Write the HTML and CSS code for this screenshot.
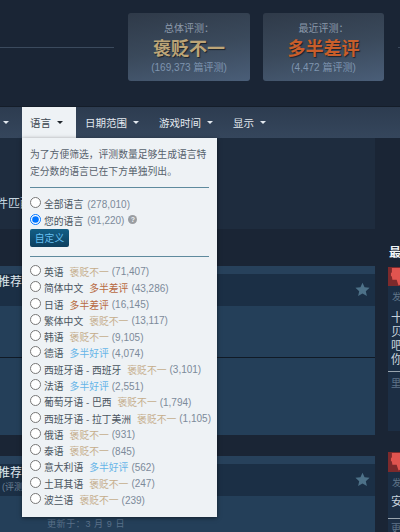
FILE: index.html
```html
<!DOCTYPE html>
<html lang="zh-CN">
<head>
<meta charset="utf-8">
<title>用户评测</title>
<link rel="stylesheet" href="styles.css">
</head>
<body>
<div class="page">
  <header class="summary">
    <div class="rule"></div>
    <div class="score">
      <div class="score-label">总体评测：</div>
      <div class="score-value mixed">褒贬不一</div>
      <div class="score-count">(169,373 篇评测)</div>
    </div>
    <div class="score">
      <div class="score-label">最近评测：</div>
      <div class="score-value negative">多半差评</div>
      <div class="score-count">(4,472 篇评测)</div>
    </div>
    <div class="rule-end"></div>
  </header>

  <nav class="filters">
    <div class="tab tab-stub"><span class="caret"></span></div>
    <div class="tab tab-active">语言<span class="caret"></span></div>
    <div class="tab">日期范围<span class="caret"></span></div>
    <div class="tab">游戏时间<span class="caret"></span></div>
    <div class="tab">显示<span class="caret"></span></div>

    <div class="menu">
      <p class="menu-intro">为了方便筛选，评测数量足够生成语言特定分数的语言已在下方单独列出。</p>
      <hr class="menu-rule">
      <label class="opt"><input type="radio" name="scope"><span>全部语言</span><span class="n n-wide">(278,010)</span></label>
      <label class="opt"><input type="radio" name="scope" checked><span>您的语言</span><span class="n n-wide">(91,220)</span><span class="help">?</span></label>
      <button class="custom">自定义</button>
      <hr class="menu-rule menu-rule-b">
      <label class="opt"><input type="radio" name="lang"><span>英语</span><span class="r mix">褒贬不一</span><span class="n">(71,407)</span></label>
      <label class="opt"><input type="radio" name="lang"><span>简体中文</span><span class="r neg">多半差评</span><span class="n">(43,286)</span></label>
      <label class="opt"><input type="radio" name="lang"><span>日语</span><span class="r neg">多半差评</span><span class="n">(16,145)</span></label>
      <label class="opt"><input type="radio" name="lang"><span>繁体中文</span><span class="r mix">褒贬不一</span><span class="n">(13,117)</span></label>
      <label class="opt"><input type="radio" name="lang"><span>韩语</span><span class="r mix">褒贬不一</span><span class="n">(9,105)</span></label>
      <label class="opt"><input type="radio" name="lang"><span>德语</span><span class="r pos">多半好评</span><span class="n">(4,074)</span></label>
      <label class="opt"><input type="radio" name="lang"><span>西班牙语 - 西班牙</span><span class="r mix">褒贬不一</span><span class="n">(3,101)</span></label>
      <label class="opt"><input type="radio" name="lang"><span>法语</span><span class="r pos">多半好评</span><span class="n">(2,551)</span></label>
      <label class="opt"><input type="radio" name="lang"><span>葡萄牙语 - 巴西</span><span class="r mix">褒贬不一</span><span class="n">(1,794)</span></label>
      <label class="opt"><input type="radio" name="lang"><span>西班牙语 - 拉丁美洲</span><span class="r mix">褒贬不一</span><span class="n">(1,105)</span></label>
      <label class="opt"><input type="radio" name="lang"><span>俄语</span><span class="r mix">褒贬不一</span><span class="n">(931)</span></label>
      <label class="opt"><input type="radio" name="lang"><span>泰语</span><span class="r mix">褒贬不一</span><span class="n">(845)</span></label>
      <label class="opt"><input type="radio" name="lang"><span>意大利语</span><span class="r pos">多半好评</span><span class="n">(562)</span></label>
      <label class="opt"><input type="radio" name="lang"><span>土耳其语</span><span class="r mix">褒贬不一</span><span class="n">(247)</span></label>
      <label class="opt"><input type="radio" name="lang"><span>波兰语</span><span class="r mix">褒贬不一</span><span class="n">(239)</span></label>
    </div>
  </nav>

  <main class="content">
    <section class="left">
      <div class="match"><span>件匹配</span></div>
      <article class="card card-one">
        <div class="card-head">
          <div class="card-title">推荐</div>
          <svg class="star" viewBox="0 0 24 24"><path d="M12 1l3.3 7.4 8 .8-6 5.4 1.7 7.9-7-4.1-7 4.1 1.700-7.900-6-5.400 8-.8z"/></svg>
        </div>
        <div class="card-body"></div>
        <div class="card-body card-body-low"></div>
      </article>
      <article class="card card-two">
        <div class="card-head">
          <div class="card-title">推荐</div>
          <div class="card-sub">(评测</div>
          <svg class="star" viewBox="0 0 24 24"><path d="M12 1l3.3 7.4 8 .8-6 5.4 1.7 7.9-7-4.1-7 4.1 1.700-7.900-6-5.400 8-.8z"/></svg>
        </div>
        <div class="card-foot">更新于：3 月 9 日</div>
      </article>
    </section>

    <aside class="right">
      <h2 class="recent">最近</h2>
      <div class="review review-one">
        <div class="thumb"><svg viewBox="0 0 20 20"><path d="M2 1h18v11H11.500L12 18l-3 1.500L7 13.500H2.500L2 10l-1-.5v-3L2 5.500z"/></svg></div>
        <div class="meta">发布</div>
        <div class="body">十<br>贝<br>吧<br>你</div>
        <div class="foot">里</div>
      </div>
      <div class="review review-two">
        <div class="thumb thumb-b"><svg viewBox="0 0 20 20"><path d="M2 1h18v11H11.500L12 18l-3 1.500L7 13.500H2.500L2 10l-1-.5v-3L2 5.500z"/></svg></div>
        <div class="meta">发布</div>
        <div class="body body-b">安</div>
        <div class="foot foot-b">更</div>
      </div>
    </aside>
  </main>
</div>
</body>
</html>
```

FILE: styles.css
```css
* { box-sizing: border-box; }
html, body { margin: 0; padding: 0; background: #1a2535; }
body { font-family: "Liberation Sans", "Noto Sans CJK SC", sans-serif; }
.page { position: relative; width: 400px; height: 532px; overflow: hidden; }

/* summary */
.summary { height: 106px; display: flex; align-items: flex-start; padding-top: 13px; }
.rule { width: 114px; height: 1px; margin-top: 34px; margin-right: 14px; background: #3b4a5d; }
.rule-end { width: 2px; height: 1px; margin-top: 34px; margin-left: 14px; background: #3b4a5d; }
.score { width: 122px; height: 68px; margin-right: 13px; border-radius: 3px; text-align: center;
  background: linear-gradient(170deg, #2f3a49 0%, #3a495b 50%, #4a5e78 100%); padding-top: 9px; }
.score + .score { width: 121px; margin-right: 0; }
.score-label { font-size: 10px; line-height: 14px; color: #8c9aab; }
.score-value { font-size: 18px; line-height: 24px; margin-top: 1px; font-weight: 700; text-shadow: 1px 1px 1px rgba(0,0,0,.55); }
.score-value.mixed { color: #bda577; }
.score-value.negative { color: #c95e2b; }
.score-count { font-size: 10px; line-height: 14px; margin-top: 0; color: #7f95b0; }

/* filter bar */
.filters { position: relative; z-index: 2; height: 32px; display: flex; align-items: stretch;
  background: linear-gradient(180deg, #2d3c50 0%, #35465c 100%); border-top: 1px solid #141d29; }
.tab { display: flex; align-items: center; padding: 0 11px 0 9px; font-size: 10.5px; color: #e3e9ef; }
.tab-stub { width: 22px; padding: 0 0 0 3px; }
.tab-stub .caret { margin-left: 0; }
.tab-active { width: 54px; padding-left: 8px; padding-right: 0; background: #eef2f5; color: #3c4650; }
.tab-active .caret { border-top-color: #20262d; }
.caret { width: 0; height: 0; margin-left: 6px; border-left: 3px solid transparent; border-right: 3px solid transparent;
  border-top: 3px solid #e3e9ef; }

/* dropdown */
.menu { position: absolute; left: 22px; top: 31px; width: 195px; height: 379px; padding: 9px 8px 0 8px;
  background: #eef2f5; box-shadow: 0 1px 4px rgba(0,0,0,.5); font-size: 9.8px; color: #4a5560; }
.menu-intro { margin: 0; width: 180px; font-size: 9.8px; line-height: 16.6px; color: #56616c; }
.menu-rule { margin: 7px 0 8px; width: 179px; height: 1px; border: 0; background: #5e8a9d; }
.menu-rule-b { margin: 9px 0 7px; }
.opt { display: flex; align-items: center; height: 16.3px; white-space: nowrap; color: #4a5560; }
.opt input { width: 11px; height: 11px; margin: -3px 3px 0 0; flex: none; }
.r { margin-left: 6px; }
.mix { color: #c5ad8b; }
.neg { color: #b86a42; }
.pos { color: #66b5e8; }
.n { margin-left: 3px; color: #7c8a9a; font-size: 10px; }
.n-wide { margin-left: 4px; }
.help { width: 9px; height: 9px; margin: -2px 0 0 4px; border-radius: 50%; background: #9a9ea2; color: #eef2f5;
  font-size: 7px; line-height: 9px; text-align: center; font-weight: 700; }
.custom { display: block; width: 39px; height: 18px; margin-top: 0; padding: 0; border: 0; border-radius: 2px;
  background: linear-gradient(180deg, #135f86 0%, #0d3f5e 100%); color: #66c0f4; font: inherit; font-size: 9.8px; }

/* main */
.content { display: flex; align-items: flex-start; gap: 13px; }
.left { width: 375px; flex: none; }
.match { height: 91px; padding-top: 57px; background: #1e2c3e; font-size: 12px; line-height: 18px; color: #c6d4df; overflow: hidden; }
.match span { display: block; margin-left: -4px; }
.card { background: #243f59; }
.card-one { margin-top: 37px; height: 169px; }
.card-two { margin-top: 21px; height: 76px; position: relative; }
.card-head { position: relative; height: 40px; border-top: 8px solid #27415b; background: #1b2f45; overflow: hidden; }
.card-title { margin-left: -2px; font-size: 12px; line-height: 15px; padding-top: 1px; color: #dfe6ec; }
.card-two .card-title { padding-top: 2px; }
.card-sub { font-size: 9px; line-height: 12px; color: #6d8296; margin-left: 2px; }
.star { position: absolute; right: 5px; top: 8px; width: 15px; height: 15px; fill: #4d7188; }
.card-body { height: 52px; border-bottom: 1px solid #101a26; }
.card-body-low { height: 77px; border-bottom: 0; }
.card-foot { margin-left: 47px; padding-top: 21px; font-size: 9px; line-height: 14px; letter-spacing: .6px; color: #5a7189; }

.right { width: 40px; flex: none; }
.recent { margin: 107px 0 0; padding-left: 1px; height: 22px; font-size: 12px; line-height: 16px; font-weight: 700; color: #f2f5f7; white-space: nowrap; }
.review { background: #1c2e44; }
.review-one { height: 164px; }
.review-two { margin-top: 21px; height: 90px; }
.thumb { height: 19px; background: #7d2a2c; padding: 0 0 0 2px; }
.thumb-b { height: 20px; }
.thumb svg { display: block; width: 19px; height: 19px; fill: #e0544f; }
.meta { margin-top: 3px; padding-left: 4px; height: 16px; font-size: 9px; line-height: 16px; color: #5f7488; white-space: nowrap; }
.body { padding: 6px 0 0 3px; font-size: 12px; line-height: 14px; color: #c8d2db; height: 67px; border-bottom: 1px solid #9aa5af; }
.body-b { height: 28px; padding-top: 4px; }
.foot { padding: 6px 0 0 3px; font-size: 10px; line-height: 12px; color: #5f7488; }
.foot-b { padding-top: 4px; }
```
